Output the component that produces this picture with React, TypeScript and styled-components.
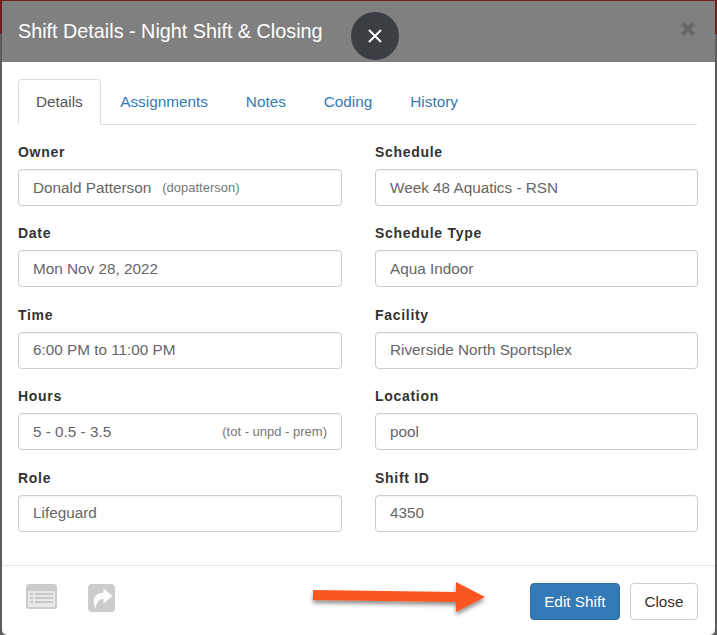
import React from 'react';
import styled, { createGlobalStyle } from 'styled-components';

const GlobalStyle = createGlobalStyle`
    html, body {
        margin: 0;
        padding: 0;
        width: 717px;
        height: 635px;
        overflow: hidden;
        background: #4a4a48;
    }
    * {
        box-sizing: border-box;
    }
`;

const Page = styled.div`
    position: relative;
    width: 717px;
    height: 635px;
    padding: 1px 2px 0 2px;
    background: linear-gradient(#6e2020 0, #6e2020 34px, #5c5c5c 34px);
    font-family: 'Liberation Sans', Arial, sans-serif;
    font-size: 14px;
`;

const Modal = styled.div`
    width: 713px;
    height: 634px;
    background: #fff;
    border-radius: 0 0 5px 5px;
    display: flex;
    flex-direction: column;
`;

const Header = styled.div`
    height: 61px;
    flex: none;
    background: #808080;
    display: flex;
    align-items: center;
    justify-content: space-between;
    padding: 0 19px 0 16px;
`;

const Title = styled.h4`
    margin: 0;
    font-size: 19.8px;
    font-weight: 400;
    color: #fff;
`;

const HeaderClose = styled.span`
    line-height: 1;
    margin-bottom: 6px;
    display: flex;
`;

const Body = styled.div`
    flex: 1;
    padding: 17px 18px 0 16px;
`;

const Tabs = styled.div`
    display: flex;
    height: 46px;
    border-bottom: 1px solid #ddd;
`;

const Tab = styled.div<{ $active?: boolean }>`
    height: ${props => (props.$active ? '46px' : '45px')};
    padding: 13px 17px 0 17px;
    margin-right: ${props => (props.$active ? '1.5px' : '2px')};
    line-height: 18px;
    font-size: 15.3px;
    color: ${props => (props.$active ? '#555' : '#337ab7')};
    background: ${props => (props.$active ? '#fff' : 'transparent')};
    border: 1px solid ${props => (props.$active ? '#ddd' : 'transparent')};
    border-bottom-color: ${props => (props.$active ? '#fff' : 'transparent')};
    border-radius: 4px 4px 0 0;
`;

const FormGrid = styled.div`
    display: grid;
    grid-template-columns: 324px 323px;
    column-gap: 33px;
    row-gap: 9px;
    padding-top: 18px;
`;

const Field = styled.div`
    display: flex;
    flex-direction: column;
    height: 72.4px;
`;

const Label = styled.label`
    font-size: 14px;
    font-weight: 700;
    line-height: 18px;
    margin-bottom: 8px;
    letter-spacing: 0.7px;
    color: #333;
`;

const Control = styled.div`
    height: 37px;
    display: flex;
    align-items: center;
    padding: 0 14px;
    border: 1px solid #ccc;
    border-radius: 4px;
    background: #fff;
    font-size: 15.3px;
    color: #666;
    box-shadow: inset 0 1px 1px rgba(0, 0, 0, 0.04);
`;

const Hint = styled.small<{ $push?: boolean }>`
    font-size: 13px;
    color: #777;
    margin-left: ${props => (props.$push ? 'auto' : '11px')};
`;

const Footer = styled.div`
    height: 70px;
    flex: none;
    border-top: 1px solid #e5e5e5;
    display: flex;
    align-items: flex-start;
    padding: 17px 17px 0 24px;
`;

const FooterIcons = styled.div`
    display: flex;
    align-items: flex-start;
    gap: 31px;
    padding-top: 1px;
`;

const FooterButtons = styled.div`
    margin-left: auto;
    display: flex;
    gap: 10px;
`;

const Button = styled.button<{ $primary?: boolean }>`
    height: 37px;
    padding: 0 13.5px;
    font-family: inherit;
    font-size: 15.3px;
    border-radius: 4px;
    border: 1px solid ${props => (props.$primary ? '#2e6da4' : '#ccc')};
    background: ${props => (props.$primary ? '#337ab7' : '#fff')};
    color: ${props => (props.$primary ? '#fff' : '#333')};
`;

const FloatingClose = styled.div`
    position: absolute;
    left: 351px;
    top: 12px;
    width: 48px;
    height: 48px;
    border-radius: 50%;
    background: #3b3e43;
    display: flex;
    align-items: center;
    justify-content: center;
`;

const Arrow = styled.svg`
    position: absolute;
    left: 305px;
    top: 574px;
    overflow: visible;
`;

const fields = [
    { label: 'Owner', value: 'Donald Patterson', hint: '(dopatterson)' },
    { label: 'Schedule', value: 'Week 48 Aquatics - RSN' },
    { label: 'Date', value: 'Mon Nov 28, 2022' },
    { label: 'Schedule Type', value: 'Aqua Indoor' },
    { label: 'Time', value: '6:00 PM to 11:00 PM' },
    { label: 'Facility', value: 'Riverside North Sportsplex' },
    { label: 'Hours', value: '5 - 0.5 - 3.5', hint: '(tot - unpd - prem)', push: true },
    { label: 'Location', value: 'pool' },
    { label: 'Role', value: 'Lifeguard' },
    { label: 'Shift ID', value: '4350' },
];

const tabs = ['Details', 'Assignments', 'Notes', 'Coding', 'History'];

const App = () => (
    <Page>
        <GlobalStyle />
        <Modal>
            <Header>
                <Title>Shift Details - Night Shift &amp; Closing</Title>
                <HeaderClose>
                    <svg width="16" height="16" viewBox="0 0 16 16">
                        <path d="M2.5 2.5 13.5 13.5M13.5 2.5 2.5 13.5" stroke="#666" strokeWidth="4" />
                    </svg>
                </HeaderClose>
            </Header>
            <Body>
                <Tabs>
                    {tabs.map((tab, i) => (
                        <Tab key={tab} $active={i === 0}>
                            {tab}
                        </Tab>
                    ))}
                </Tabs>
                <FormGrid>
                    {fields.map(field => (
                        <Field key={field.label}>
                            <Label>{field.label}</Label>
                            <Control>
                                {field.value}
                                {field.hint && <Hint $push={field.push}>{field.hint}</Hint>}
                            </Control>
                        </Field>
                    ))}
                </FormGrid>
            </Body>
            <Footer>
                <FooterIcons>
                    <svg width="31" height="25" viewBox="0 0 31 25">
                        <rect width="31" height="25" rx="3" fill="#ccc" />
                        <path d="M2 7h27v16H2z" fill="#e8e8e8" />
                        <path
                            d="M4 9h3v2H4zM9 9h18v2H9zM4 13h3v2H4zM9 13h18v2H9zM4 17h3v2H4zM9 17h18v2H9z"
                            fill="#c8c8c8"
                        />
                    </svg>
                    <svg width="27" height="28" viewBox="0 0 27 28">
                        <rect width="27" height="28" rx="4" fill="#ccc" />
                        <path
                            d="M15.5 4.5 24.5 12 15.5 19.5V15C11 15 8.500 17.500 7.500 24.500 3.500 16 6.500 9 15.500 8.500Z"
                            fill="#fff"
                        />
                    </svg>
                </FooterIcons>
                <FooterButtons>
                    <Button $primary>Edit Shift</Button>
                    <Button>Close</Button>
                </FooterButtons>
            </Footer>
        </Modal>
        <FloatingClose>
            <svg width="16" height="16" viewBox="0 0 16 16">
                <path d="M2 2 14 14M14 2 2 14" stroke="#fff" strokeWidth="2" />
            </svg>
        </FloatingClose>
        <Arrow width="186" height="50" viewBox="0 0 186 50">
            <defs>
                <filter id="arrow-shadow" x="-10%" y="-30%" width="120%" height="170%">
                    <feDropShadow dx="0" dy="3" stdDeviation="2" floodColor="#000" floodOpacity="0.45" />
                </filter>
            </defs>
            <path
                d="M8 16 151 18 151 8 180 23 151 38 151 28 8 26Z"
                fill="#f95720"
                filter="url(#arrow-shadow)"
            />
        </Arrow>
    </Page>
);

export default App;
